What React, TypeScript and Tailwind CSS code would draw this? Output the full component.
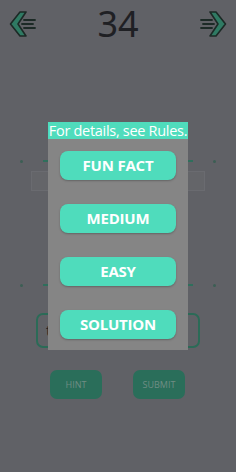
import React from 'react'

function ArrowIcon({ flip }: { flip?: boolean }) {
  return (
    <svg width="30" height="28" viewBox="0 0 30 28" className={flip ? '-scale-x-100' : ''}>
      <path d="M11 2 L1.5 14 L11 26 L17 26 L9 14 L17 2 Z" fill="#2f7a63" stroke="#1c2a26" strokeWidth="1.6" strokeLinejoin="round" />
      <line x1="15" y1="10" x2="26" y2="10" stroke="#1c2a26" strokeWidth="1.8" strokeLinecap="round" />
      <line x1="13" y1="14" x2="24" y2="14" stroke="#1c2a26" strokeWidth="1.8" strokeLinecap="round" />
      <line x1="15" y1="18" x2="26" y2="18" stroke="#1c2a26" strokeWidth="1.8" strokeLinecap="round" />
    </svg>
  )
}

function Divider() {
  return (
    <div className="flex items-center px-[20px] h-[4px]">
      <span className="w-[3px] h-[3px] rounded-full bg-[#3c5e54]" />
      <div className="flex-1 mx-[20px] h-[2px] bg-[#2f6f5c]" />
      <span className="w-[3px] h-[3px] rounded-full bg-[#3c5e54]" />
    </div>
  )
}

const options = ['FUN FACT', 'MEDIUM', 'EASY', 'SOLUTION']

export default function App() {
  return (
    <div className="relative w-[236px] h-[472px] bg-[#606166] overflow-hidden" style={{ fontFamily: '"Open Sans", "Noto Sans", sans-serif' }}>
      <div className="flex items-center justify-between px-[9px] pt-[6px] h-[42px]">
        <ArrowIcon />
        <span className="text-[36px] leading-none text-[#1f2024]" style={{ fontFamily: '"Noto Sans", sans-serif' }}>34</span>
        <ArrowIcon flip />
      </div>

      <div className="mt-[117px]">
        <Divider />
        <div className="mx-[31px] mt-[8px] h-[20px] border border-[#6a6b70] bg-[#646569]" />
      </div>

      <div className="mt-[92px]">
        <Divider />
      </div>

      <div className="mx-[36px] mt-[26px] h-[35px] rounded-[7px] border-2 border-[#2b6b57] flex items-center px-[8px] text-[15px] text-[#1f2024]">
        type
      </div>

      <div className="flex justify-between pl-[50px] pr-[51px] mt-[22px]">
        <div className="w-[52px] h-[29px] rounded-[7px] bg-[#2a6e5a] flex items-center justify-center text-[9px] text-[#6f8d84]">HINT</div>
        <div className="w-[52px] h-[29px] rounded-[7px] bg-[#2a6e5a] flex items-center justify-center text-[9px] text-[#6f8d84]">SUBMIT</div>
      </div>

      <div className="absolute left-[48px] top-[122px] w-[140px] h-[228px] bg-[#858585] flex flex-col">
        <div className="h-[17px] bg-[#4fdcbc] text-white text-[14.5px] leading-[17px] text-center whitespace-nowrap tracking-[-0.3px]">
          For details, see Rules.
        </div>
        <div className="flex flex-col items-center gap-[24px] pt-[12px]">
          {options.map((o) => (
            <div key={o} className="w-[116px] h-[29px] rounded-[8px] bg-[#4fdcbc] shadow-[0_1px_2px_rgba(0,0,0,0.25)] flex items-center justify-center text-white font-bold text-[15px] tracking-[-0.2px]">
              {o}
            </div>
          ))}
        </div>
      </div>
    </div>
  )
}
